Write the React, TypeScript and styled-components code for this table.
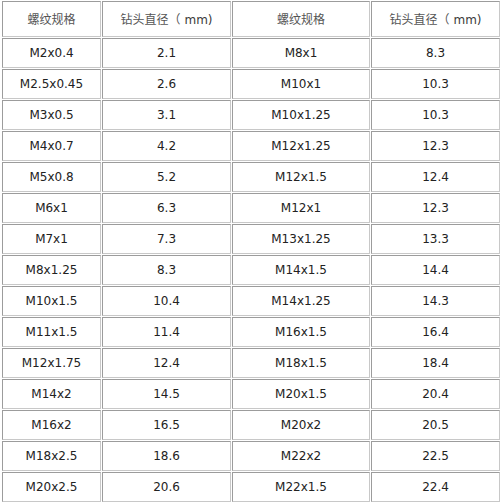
import React from 'react';
import styled, { createGlobalStyle } from 'styled-components';

const GlobalStyle = createGlobalStyle`
  html, body {
    margin: 0;
    padding: 0;
    background: #ffffff;
  }
`;

const Page = styled.div`
  width: 500px;
  height: 504px;
  padding: 0 0 0 1px;
  box-sizing: border-box;
  overflow: hidden;
`;

const Table = styled.table`
  width: 497px;
  height: 503px;
  border-collapse: separate;
  border-spacing: 1px;
  table-layout: fixed;
  font-family: 'DejaVu Sans', Verdana, sans-serif;
  font-size: 12px;
  color: #222222;
`;

const Col = styled.col<{ $w: number }>`
  width: ${(p) => p.$w}px;
`;

const Cell = styled.td`
  border-top: 1px solid #9c9c9c;
  border-left: 1px solid #9c9c9c;
  border-right: 1px solid #c8c8c8;
  border-bottom: 1px solid #c8c8c8;
  text-align: center;
  vertical-align: middle;
  padding: 0;
  white-space: nowrap;
`;

const HeadCell = styled(Cell)`
  font-family: 'Noto Sans CJK SC', 'DejaVu Sans', sans-serif;
  font-size: 12px;
  color: #555555;
`;

const Mm = styled.span`
  font-family: 'DejaVu Sans', sans-serif;
  color: #3a3a3a;
  margin-left: 4px;
`;

const left: [string, string][] = [
  ['M2x0.4', '2.1'],
  ['M2.5x0.45', '2.6'],
  ['M3x0.5', '3.1'],
  ['M4x0.7', '4.2'],
  ['M5x0.8', '5.2'],
  ['M6x1', '6.3'],
  ['M7x1', '7.3'],
  ['M8x1.25', '8.3'],
  ['M10x1.5', '10.4'],
  ['M11x1.5', '11.4'],
  ['M12x1.75', '12.4'],
  ['M14x2', '14.5'],
  ['M16x2', '16.5'],
  ['M18x2.5', '18.6'],
  ['M20x2.5', '20.6'],
];

const right: [string, string][] = [
  ['M8x1', '8.3'],
  ['M10x1', '10.3'],
  ['M10x1.25', '10.3'],
  ['M12x1.25', '12.3'],
  ['M12x1.5', '12.4'],
  ['M12x1', '12.3'],
  ['M13x1.25', '13.3'],
  ['M14x1.5', '14.4'],
  ['M14x1.25', '14.3'],
  ['M16x1.5', '16.4'],
  ['M18x1.5', '18.4'],
  ['M20x1.5', '20.4'],
  ['M20x2', '20.5'],
  ['M22x2', '22.5'],
  ['M22x1.5', '22.4'],
];

function DrillHead() {
  return (
    <HeadCell>
      钻头直径（<Mm>mm)</Mm>
    </HeadCell>
  );
}

export default function App() {
  return (
    <>
      <GlobalStyle />
      <Page>
        <Table>
          <colgroup>
            <Col $w={99} />
            <Col $w={129} />
            <Col $w={138} />
            <Col $w={129} />
          </colgroup>
          <tbody>
            <tr>
              <HeadCell>螺纹规格</HeadCell>
              <DrillHead />
              <HeadCell>螺纹规格</HeadCell>
              <DrillHead />
            </tr>
            {left.map((row, i) => (
              <tr key={row[0]}>
                <Cell>{row[0]}</Cell>
                <Cell>{row[1]}</Cell>
                <Cell>{right[i][0]}</Cell>
                <Cell>{right[i][1]}</Cell>
              </tr>
            ))}
          </tbody>
        </Table>
      </Page>
    </>
  );
}
